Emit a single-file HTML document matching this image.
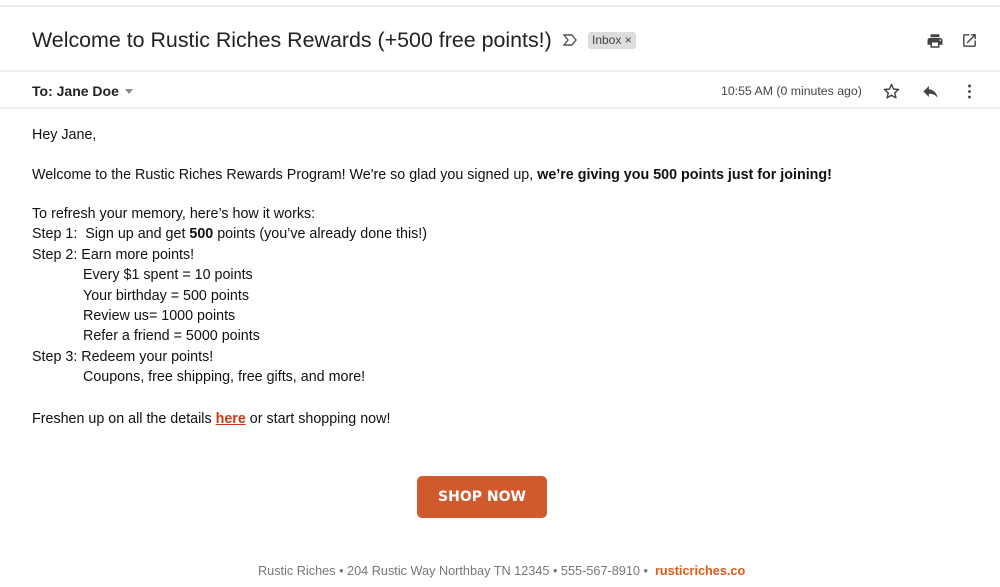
<!DOCTYPE html>
<html><head><style>
body{margin:0;width:1000px;height:587px;background:#fff;font-family:"Liberation Sans",Arial,sans-serif;position:relative;overflow:hidden;color:#222}
.a{position:absolute;white-space:nowrap}
.hr{position:absolute;left:0;width:1000px;height:2px;background:#eee}
.b{font-size:14.3px;color:#111;line-height:20.4px}
</style></head><body>
<div class="hr" style="top:5px"></div>
<div class="a" style="left:32px;top:28px;font-size:21.4px;color:#222">Welcome to Rustic Riches Rewards (+500 free points!)</div>
<svg class="a" style="left:562px;top:33px" width="16" height="14" viewBox="0 0 16 14"><path d="M2 2h8l4 5-4 5H2l4-5z" fill="none" stroke="#555" stroke-width="1.4"/></svg>
<div class="a" style="left:588px;top:32px;background:#ddd;border-radius:3px;font-size:12px;color:#444;padding:1px 4px;line-height:15px">Inbox ×</div>
<svg class="a" style="left:926px;top:32px" width="18" height="18" viewBox="0 0 24 24"><path d="M19 8H5c-1.7 0-3 1.3-3 3v6h4v4h12v-4h4v-6c0-1.7-1.3-3-3-3zm-3 11H8v-5h8v5zm3-7c-.6 0-1-.4-1-1s.4-1 1-1 1 .4 1 1-.4 1-1 1zm-1-9H6v4h12V3z" fill="#444"/></svg>
<svg class="a" style="left:961px;top:32px" width="17" height="17" viewBox="0 0 24 24"><path d="M19 19H5V5h7V3H5a2 2 0 00-2 2v14a2 2 0 002 2h14c1.1 0 2-.9 2-2v-7h-2v7zM14 3v2h3.6l-9.8 9.8 1.4 1.4L19 6.4V10h2V3h-7z" fill="#444"/></svg>
<div class="hr" style="top:70px"></div>
<div class="a" style="left:32px;top:83px;font-size:14px;font-weight:bold;color:#222">To: Jane Doe</div>
<div class="a" style="left:125px;top:89px;width:0;height:0;border-left:4px solid transparent;border-right:4px solid transparent;border-top:5px solid #888"></div>
<div class="a" style="left:721px;top:84px;font-size:12.3px;color:#444">10:55 AM (0 minutes ago)</div>
<svg class="a" style="left:882px;top:82px" width="19" height="19" viewBox="0 0 24 24"><path d="M12 3l2.6 6 6.4.5-4.9 4.2 1.5 6.3L12 16.7 6.4 20l1.5-6.3L3 9.5 9.4 9z" fill="none" stroke="#444" stroke-width="1.8" stroke-linejoin="round"/></svg>
<svg class="a" style="left:921px;top:82px" width="19" height="19" viewBox="0 0 24 24"><path d="M10 9V5l-7 7 7 7v-4.1c5 0 8.5 1.6 11 5.1-1-5-4-10-11-11z" fill="#444"/></svg>
<svg class="a" style="left:960px;top:82px" width="19" height="19" viewBox="0 0 24 24"><circle cx="12" cy="5" r="1.8" fill="#444"/><circle cx="12" cy="12" r="1.8" fill="#444"/><circle cx="12" cy="19" r="1.8" fill="#444"/></svg>
<div class="hr" style="top:107px"></div>
<div class="a b" style="left:32px;top:125px">Hey Jane,</div>
<div class="a b" style="left:32px;top:165px">Welcome to the Rustic Riches Rewards Program! We're so glad you signed up, <b>we’re giving you 500 points just for joining!</b></div>
<div class="a b" style="left:32px;top:204px">To refresh your memory, here’s how it works:<br>Step 1:&nbsp; Sign up and get <b>500</b> points (you’ve already done this!)<br>Step 2: Earn more points!<br><span style="padding-left:51px">Every $1 spent = 10 points</span><br><span style="padding-left:51px">Your birthday = 500 points</span><br><span style="padding-left:51px">Review us= 1000 points</span><br><span style="padding-left:51px">Refer a friend = 5000 points</span><br>Step 3: Redeem your points!<br><span style="padding-left:51px">Coupons, free shipping, free gifts, and more!</span></div>
<div class="a b" style="left:32px;top:409px">Freshen up on all the details <b style="color:#c83a14;text-decoration:underline">here</b> or start shopping now!</div>
<div class="a" style="left:417px;top:476px;width:130px;height:42px;background:#d05a2e;border-radius:5px;color:#fff;font-size:14px;font-weight:bold;text-align:center;line-height:42px;font-family:'DejaVu Sans',sans-serif">SHOP NOW</div>
<div class="a" style="left:258px;top:564px;font-size:12.7px;color:#777">Rustic Riches • 204 Rustic Way Northbay TN 12345 • 555-567-8910 • &nbsp;<b style="color:#e05a1a">rusticriches.co</b></div>
</body></html>
